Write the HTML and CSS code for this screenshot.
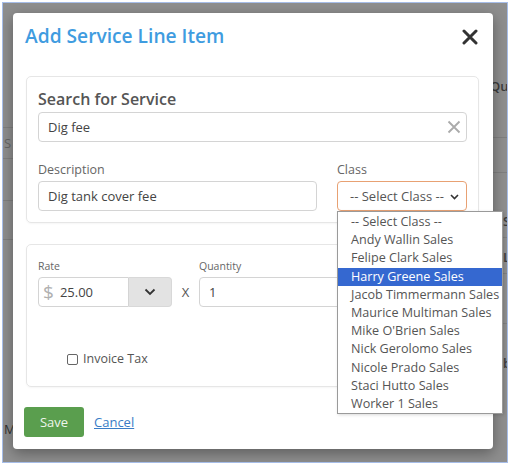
FILE: index.html
```html
<!DOCTYPE html>
<html>
<head>
<meta charset="utf-8">
<link rel="stylesheet" href="styles.css">
</head>
<body>
<div class="frame">
  <div class="backdrop">
    <div class="bg-line l1"></div>
    <div class="bg-line l2"></div>
    <div class="bg-line l3"></div>
    <div class="bg-line l4"></div>
    <div class="bg-line r1"></div>
    <div class="bg-line r2"></div>
    <div class="bg-line r3"></div>
    <div class="bg-line r4"></div>
    <div class="bg-line r5"></div>
    <span class="bg-text t-qua">Qua</span>
    <span class="bg-text t-s">S</span>
    <span class="bg-text t-m">M</span>
    <span class="bg-text t-r1">S</span>
    <span class="bg-text t-r2">L</span>
    <span class="bg-text t-r3">b</span>
  </div>
  <div class="modal">
    <div class="modal-header">
      <h2 class="modal-title">Add Service Line Item</h2>
      <svg class="close-icon" width="16" height="16" viewBox="0 0 16 16"><path d="M2 2L14 14M14 2L2 14" stroke="#333" stroke-width="3" stroke-linecap="round"/></svg>
    </div>
    <div class="card card-service">
      <div class="card-heading">Search for Service</div>
      <div class="field-input search-input">
        <span class="input-text">Dig fee</span>
        <svg class="clear-icon" width="14" height="14" viewBox="0 0 14 14"><path d="M1.5 1.5L12.5 12.5M12.5 1.5L1.5 12.5" stroke="#aaa" stroke-width="1.8"/></svg>
      </div>
      <div class="row">
        <div class="col col-desc">
          <div class="label">Description</div>
          <div class="field-input"><span class="input-text">Dig tank cover fee</span></div>
        </div>
        <div class="col col-class">
          <div class="label">Class</div>
          <div class="select">
            <span class="select-text">-- Select Class --</span>
            <svg class="select-chev" width="9" height="6" viewBox="0 0 9 6"><path d="M1 1L4.5 4.5L8 1" fill="none" stroke="#333" stroke-width="1.6"/></svg>
            <div class="dropdown">
              <div class="opt">-- Select Class --</div>
              <div class="opt">Andy Wallin Sales</div>
              <div class="opt">Felipe Clark Sales</div>
              <div class="opt opt-active">Harry Greene Sales</div>
              <div class="opt">Jacob Timmermann Sales</div>
              <div class="opt">Maurice Multiman Sales</div>
              <div class="opt">Mike O'Brien Sales</div>
              <div class="opt">Nick Gerolomo Sales</div>
              <div class="opt">Nicole Prado Sales</div>
              <div class="opt">Staci Hutto Sales</div>
              <div class="opt">Worker 1 Sales</div>
            </div>
          </div>
        </div>
      </div>
    </div>
    <div class="card card-rate">
      <div class="rate-row">
        <div class="rate-col">
          <div class="label small">Rate</div>
          <div class="input-group">
            <div class="field-input rate-input"><span class="dollar">$</span><span class="input-text">25.00</span></div>
            <div class="group-btn"><svg width="12" height="8" viewBox="0 0 12 8"><path d="M1.5 1.5L6 6L10.5 1.5" fill="none" stroke="#333" stroke-width="1.8"/></svg></div>
          </div>
        </div>
        <div class="times">X</div>
        <div class="qty-col">
          <div class="label small">Quantity</div>
          <div class="field-input qty-input"><span class="input-text">1</span></div>
        </div>
      </div>
      <label class="check-row"><span class="checkbox"></span><span class="check-label">Invoice Tax</span></label>
    </div>
    <div class="actions">
      <button class="btn-save">Save</button>
      <a class="cancel">Cancel</a>
    </div>
  </div>
</div>
</body>
</html>
```
FILE: styles.css
```css
html, body { margin: 0; padding: 0; background: #ffffff; }
body { font-family: "Open Sans", "Liberation Sans", sans-serif; }

.frame {
  position: relative;
  margin: 2px 0 0 2px;
  width: 504px;
  height: 459px;
  border: 1px solid #a6bde8;
  background: #8e8e8e;
  overflow: hidden;
}
.backdrop { position: absolute; inset: 0; }
.bg-line { position: absolute; height: 1px; background: #7f7f7f; }
.l1 { left: 0; width: 12px; top: 124px; }
.l2 { left: 0; width: 12px; top: 155px; }
.l3 { left: 0; width: 12px; top: 197px; }
.l4 { left: 0; width: 12px; top: 236px; }
.r1 { right: 0; width: 20px; top: 134px; }
.r2 { right: 0; width: 20px; top: 169px; }
.r3 { right: 0; width: 20px; top: 234px; }
.r4 { right: 0; width: 20px; top: 270px; }
.r5 { right: 0; width: 20px; top: 320px; }
.bg-text { position: absolute; font-size: 13px; font-weight: 600; color: #3c3c3c; line-height: 16px; }
.t-qua { left: 487px; top: 75px; }
.t-s { left: 1px; top: 132px; color: #666; font-weight: 400; }
.t-m { left: 1px; top: 418px; color: #333; font-weight: 400; }
.t-r1 { left: 500px; top: 210px; }
.t-r2 { left: 500px; top: 246px; }
.t-r3 { left: 500px; top: 352px; }

.modal {
  position: absolute;
  left: 10px;
  top: 10px;
  width: 480px;
  height: 436px;
  box-sizing: border-box;
  background: #ffffff;
  border-radius: 4px;
  box-shadow: 0 4px 14px rgba(0,0,0,0.35);
  padding: 0 13px 0 12px;
}
.modal-header {
  display: flex;
  align-items: center;
  justify-content: space-between;
  padding-top: 9px;
  height: 28px;
  margin-bottom: 26px;
}
.modal-title {
  margin: 0;
  font-size: 19.2px;
  line-height: 28px;
  font-weight: 600;
  color: #3f9ce0;
}
.close-icon { margin-right: 2px; margin-top: 2px; }

.card {
  margin-left: 1px;
  border: 1px solid #e6e6e6;
  border-radius: 5px;
  box-sizing: border-box;
  width: 453px;
  box-shadow: 0 1px 2px rgba(0,0,0,0.04);
}
.card-service { padding: 11px 11px 12px; height: 147px; }
.card-heading {
  font-size: 16px;
  line-height: 22px;
  font-weight: 600;
  color: #555;
  margin-bottom: 2px;
}
.field-input {
  box-sizing: border-box;
  height: 30px;
  border: 1px solid #d4d4d4;
  border-radius: 4px;
  display: flex;
  align-items: center;
  padding: 0 9px;
  background: #fff;
}
.input-text { font-size: 13px; color: #444; white-space: nowrap; }
.search-input { justify-content: space-between; padding-right: 5px; }

.row { display: flex; gap: 20px; margin-top: 19px; }
.col-desc { width: 279px; }
.col-class { width: 130px; }
.label {
  font-size: 12.5px;
  line-height: 18px;
  color: #666;
  margin-bottom: 2px;
}
.label.small { font-size: 10.5px; line-height: 15px; margin-bottom: 3px; }

.select {
  position: relative;
  box-sizing: border-box;
  height: 30px;
  border: 1px solid #e8a173;
  border-radius: 4px;
  display: flex;
  align-items: center;
  justify-content: space-between;
  padding: 0 7px 0 12px;
}
.select-text { font-size: 13px; color: #555; white-space: nowrap; }
.select-chev { margin-top: 1px; }
.dropdown {
  position: absolute;
  left: -1px;
  top: 29px;
  width: 166px;
  box-sizing: border-box;
  border: 1px solid #9a9a9a;
  background: #fff;
  padding-top: 1px;
  height: 203px;
  z-index: 5;
  box-shadow: 1px 1px 3px rgba(0,0,0,0.15);
}
.opt {
  font-size: 12.6px;
  line-height: 18.2px;
  height: 18.2px;
  padding-left: 13px;
  color: #555;
  white-space: nowrap;
}
.opt-active { background: #3568d0; color: #fff; }

.card-rate { margin-top: 21px; height: 143px; padding: 14px 11px 0; }
.rate-row { display: flex; align-items: flex-end; }
.input-group { display: flex; }
.rate-input { width: 91px; border-radius: 4px 0 0 4px; padding-left: 4px; }
.dollar { font-size: 19px; color: #b0b0b0; margin-right: 6px; line-height: 20px; }
.group-btn {
  width: 43px;
  height: 30px;
  box-sizing: border-box;
  background: #e3e3e3;
  border: 1px solid #d8d8d8;
  border-left: none;
  border-radius: 0 4px 4px 0;
  display: flex;
  align-items: center;
  justify-content: center;
}
.times { width: 27px; height: 30px; line-height: 30px; text-align: center; font-size: 13px; color: #555; }
.qty-input { width: 190px; }

.check-row { display: flex; align-items: center; margin-top: 43px; margin-left: 29px; }
.checkbox {
  width: 9px;
  height: 9px;
  border: 1px solid #666;
  border-radius: 2px;
  background: #fff;
  margin-right: 5px;
}
.check-label { font-size: 12.5px; color: #555; line-height: 18px; }

.actions { display: flex; align-items: center; margin-top: 20px; }
.btn-save {
  width: 60px;
  height: 30px;
  border: none;
  border-radius: 3px;
  background: #5a9e4e;
  color: #eef5ec;
  font-family: "Open Sans", "Liberation Sans", sans-serif;
  font-size: 13px;
  padding: 0;
  margin-left: -1px;
}
.cancel {
  margin-left: 10px;
  font-size: 13px;
  color: #3a7cc6;
  text-decoration: underline;
}
```
